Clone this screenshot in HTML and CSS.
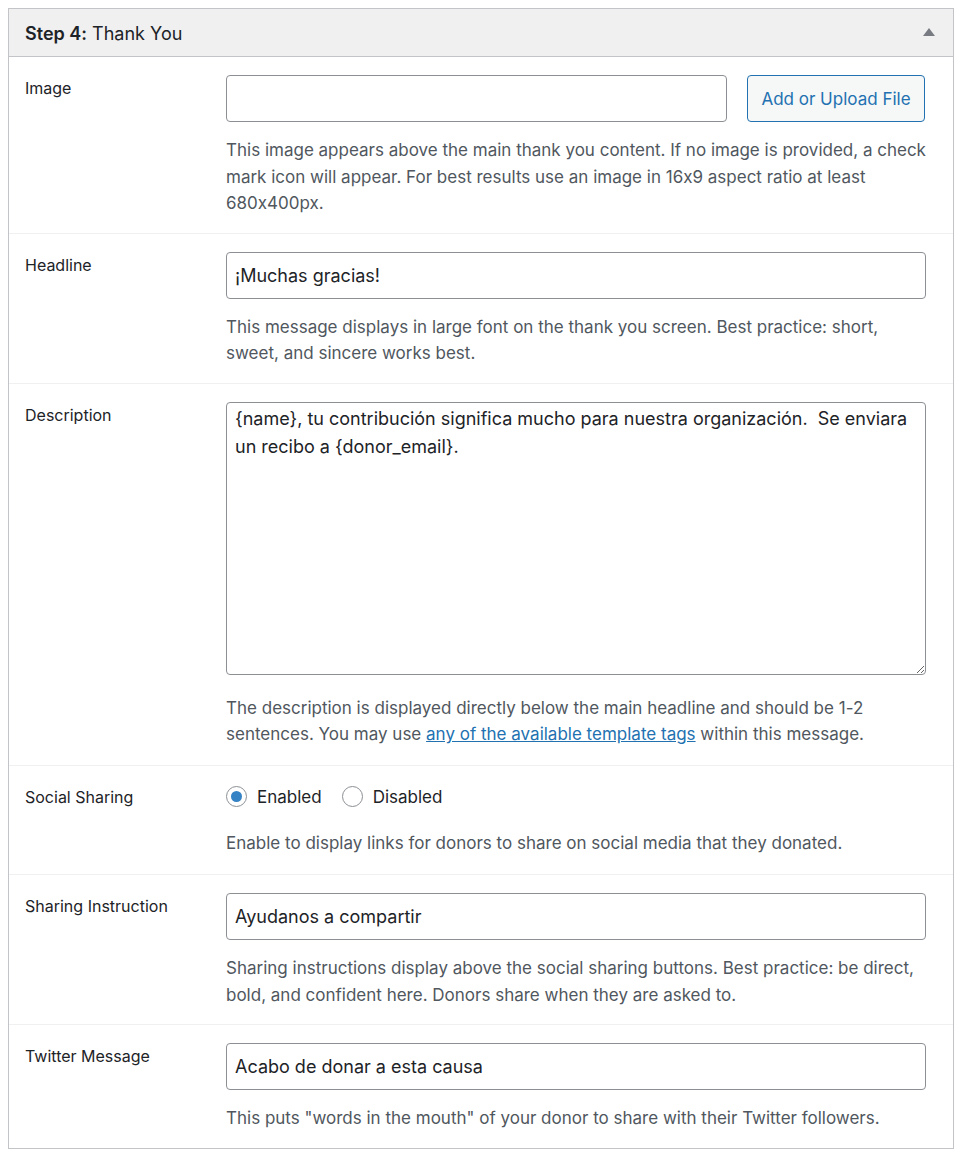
FILE: index.html
```html
<!DOCTYPE html>
<html lang="en">
<head>
    <meta charset="UTF-8">
    <meta name="viewport" content="width=device-width, initial-scale=1.0">
    <title>Step 4: Thank You</title>
    <link rel="stylesheet" href="styles.css">
</head>
<body>

    <div class="postbox">
        <!-- Cabecera de la caja -->
        <div class="postbox-header">
            <h2><strong>Step 4:</strong> Thank You</h2>
            <span class="toggle-arrow"></span>
        </div>

        <div class="field-row">
            <div class="field-label">Image</div>
            <div class="field-body">
                <div class="upload-line">
                    <input type="text" class="text-input">
                    <button class="upload-button">Add or Upload File</button>
                </div>
                <p class="description">This image appears above the main thank you content. If no image is provided, a check mark icon will appear. For best results use an image in 16x9 aspect ratio at least 680x400px.</p>
            </div>
        </div>

        <div class="field-row">
            <div class="field-label">Headline</div>
            <div class="field-body">
                <input type="text" class="text-input" value="¡Muchas gracias!">
                <p class="description">This message displays in large font on the thank you screen. Best practice: short, sweet, and sincere works best.</p>
            </div>
        </div>

        <div class="field-row textarea-row">
            <div class="field-label">Description</div>
            <div class="field-body">
                <textarea class="text-area">{name}, tu contribución significa mucho para nuestra organización.  Se enviara un recibo a {donor_email}.</textarea>
                <p class="description">The description is displayed directly below the main headline and should be 1-2 sentences. You may use <a href="#">any of the available template tags</a> within this message.</p>
            </div>
        </div>

        <div class="field-row radio-row">
            <div class="field-label">Social Sharing</div>
            <div class="field-body">
                <div class="radio-line">
                    <label><span class="radio checked"></span>Enabled</label>
                    <label><span class="radio"></span>Disabled</label>
                </div>
                <p class="description">Enable to display links for donors to share on social media that they donated.</p>
            </div>
        </div>

        <div class="field-row">
            <div class="field-label">Sharing Instruction</div>
            <div class="field-body">
                <input type="text" class="text-input" value="Ayudanos a compartir">
                <p class="description">Sharing instructions display above the social sharing buttons. Best practice: be direct, bold, and confident here. Donors share when they are asked to.</p>
            </div>
        </div>

        <div class="field-row last">
            <div class="field-label">Twitter Message</div>
            <div class="field-body">
                <input type="text" class="text-input" value="Acabo de donar a esta causa">
                <p class="description">This puts "words in the mouth" of your donor to share with their Twitter followers.</p>
            </div>
        </div>
    </div>

</body>
</html>
```

FILE: styles.css
```css
/* Reset */
* {
    margin: 0;
    padding: 0;
    box-sizing: border-box;
}

body {
    font-family: 'Inter', 'Liberation Sans', sans-serif;
    font-feature-settings: "calt" 0;
    background-color: #fff;
    color: #1d2327;
    padding: 8px;
}

/* Caja principal */
.postbox {
    width: 946px;
    border: 1px solid #c3c4c7;
    background-color: #fff;
}

.postbox-header {
    display: flex;
    align-items: center;
    justify-content: space-between;
    height: 48px;
    padding: 2px 18px 0 16px;
    background-color: #f0f0f1;
    border-bottom: 1px solid #c3c4c7;
}

.postbox-header h2 {
    font-size: 18px;
    font-weight: 400;
    color: #1d2327;
}

.postbox-header strong {
    font-weight: 600;
}

.toggle-arrow {
    width: 0;
    height: 0;
    border-left: 6px solid transparent;
    border-right: 6px solid transparent;
    border-bottom: 8px solid #787c82;
    margin-top: -4px;
}

/* Filas del formulario */
.field-row {
    display: flex;
    padding: 18px 0 16px 16px;
    border-bottom: 1px solid #f0f0f1;
}

.field-row.last {
    border-bottom: none;
}

.field-label {
    width: 201px;
    flex-shrink: 0;
    padding-top: 1px;
    font-size: 16px;
    line-height: 24px;
    color: #1d2327;
}

.field-body {
    width: 700px;
}

.upload-line {
    display: flex;
    gap: 20px;
}

.text-input {
    display: block;
    width: 700px;
    height: 47px;
    padding: 0 8px;
    border: 1px solid #8c8f94;
    border-radius: 4px;
    font-family: inherit;
    font-feature-settings: inherit;
    font-size: 18px;
    color: #1d2327;
    background-color: #fff;
}

.upload-line .text-input {
    width: 501px;
}

.upload-button {
    width: 178px;
    height: 47px;
    border: 1px solid #2271b1;
    border-radius: 4px;
    background-color: #f6f7f7;
    color: #2271b1;
    font-family: inherit;
    font-size: 17px;
}

.text-area {
    display: block;
    width: 700px;
    height: 273px;
    padding: 2px 8px;
    border: 1px solid #8c8f94;
    border-radius: 4px;
    font-family: inherit;
    font-feature-settings: inherit;
    font-size: 18px;
    line-height: 28px;
    color: #1d2327;
    resize: vertical;
}

.description {
    margin-top: 15px;
    font-size: 17px;
    line-height: 26.5px;
    color: #50575e;
}

.description a {
    color: #2271b1;
}

.textarea-row {
    padding-bottom: 17px;
}

.textarea-row .description {
    margin-top: 20px;
}

/* Botones de opción */
.radio-row {
    padding-bottom: 18px;
}

.radio-line {
    display: flex;
    gap: 20px;
    height: 24px;
    margin-top: 1px;
    align-items: center;
}

.radio-line label {
    display: flex;
    align-items: center;
    font-size: 17px;
    color: #1d2327;
}

.radio {
    width: 21px;
    height: 21px;
    border: 1px solid #8c8f94;
    border-radius: 50%;
    margin-right: 10px;
    display: flex;
    align-items: center;
    justify-content: center;
}

.radio.checked::after {
    content: '';
    width: 11px;
    height: 11px;
    border-radius: 50%;
    background-color: #3582c4;
}

.radio-row .description {
    margin-top: 21px;
}
```
